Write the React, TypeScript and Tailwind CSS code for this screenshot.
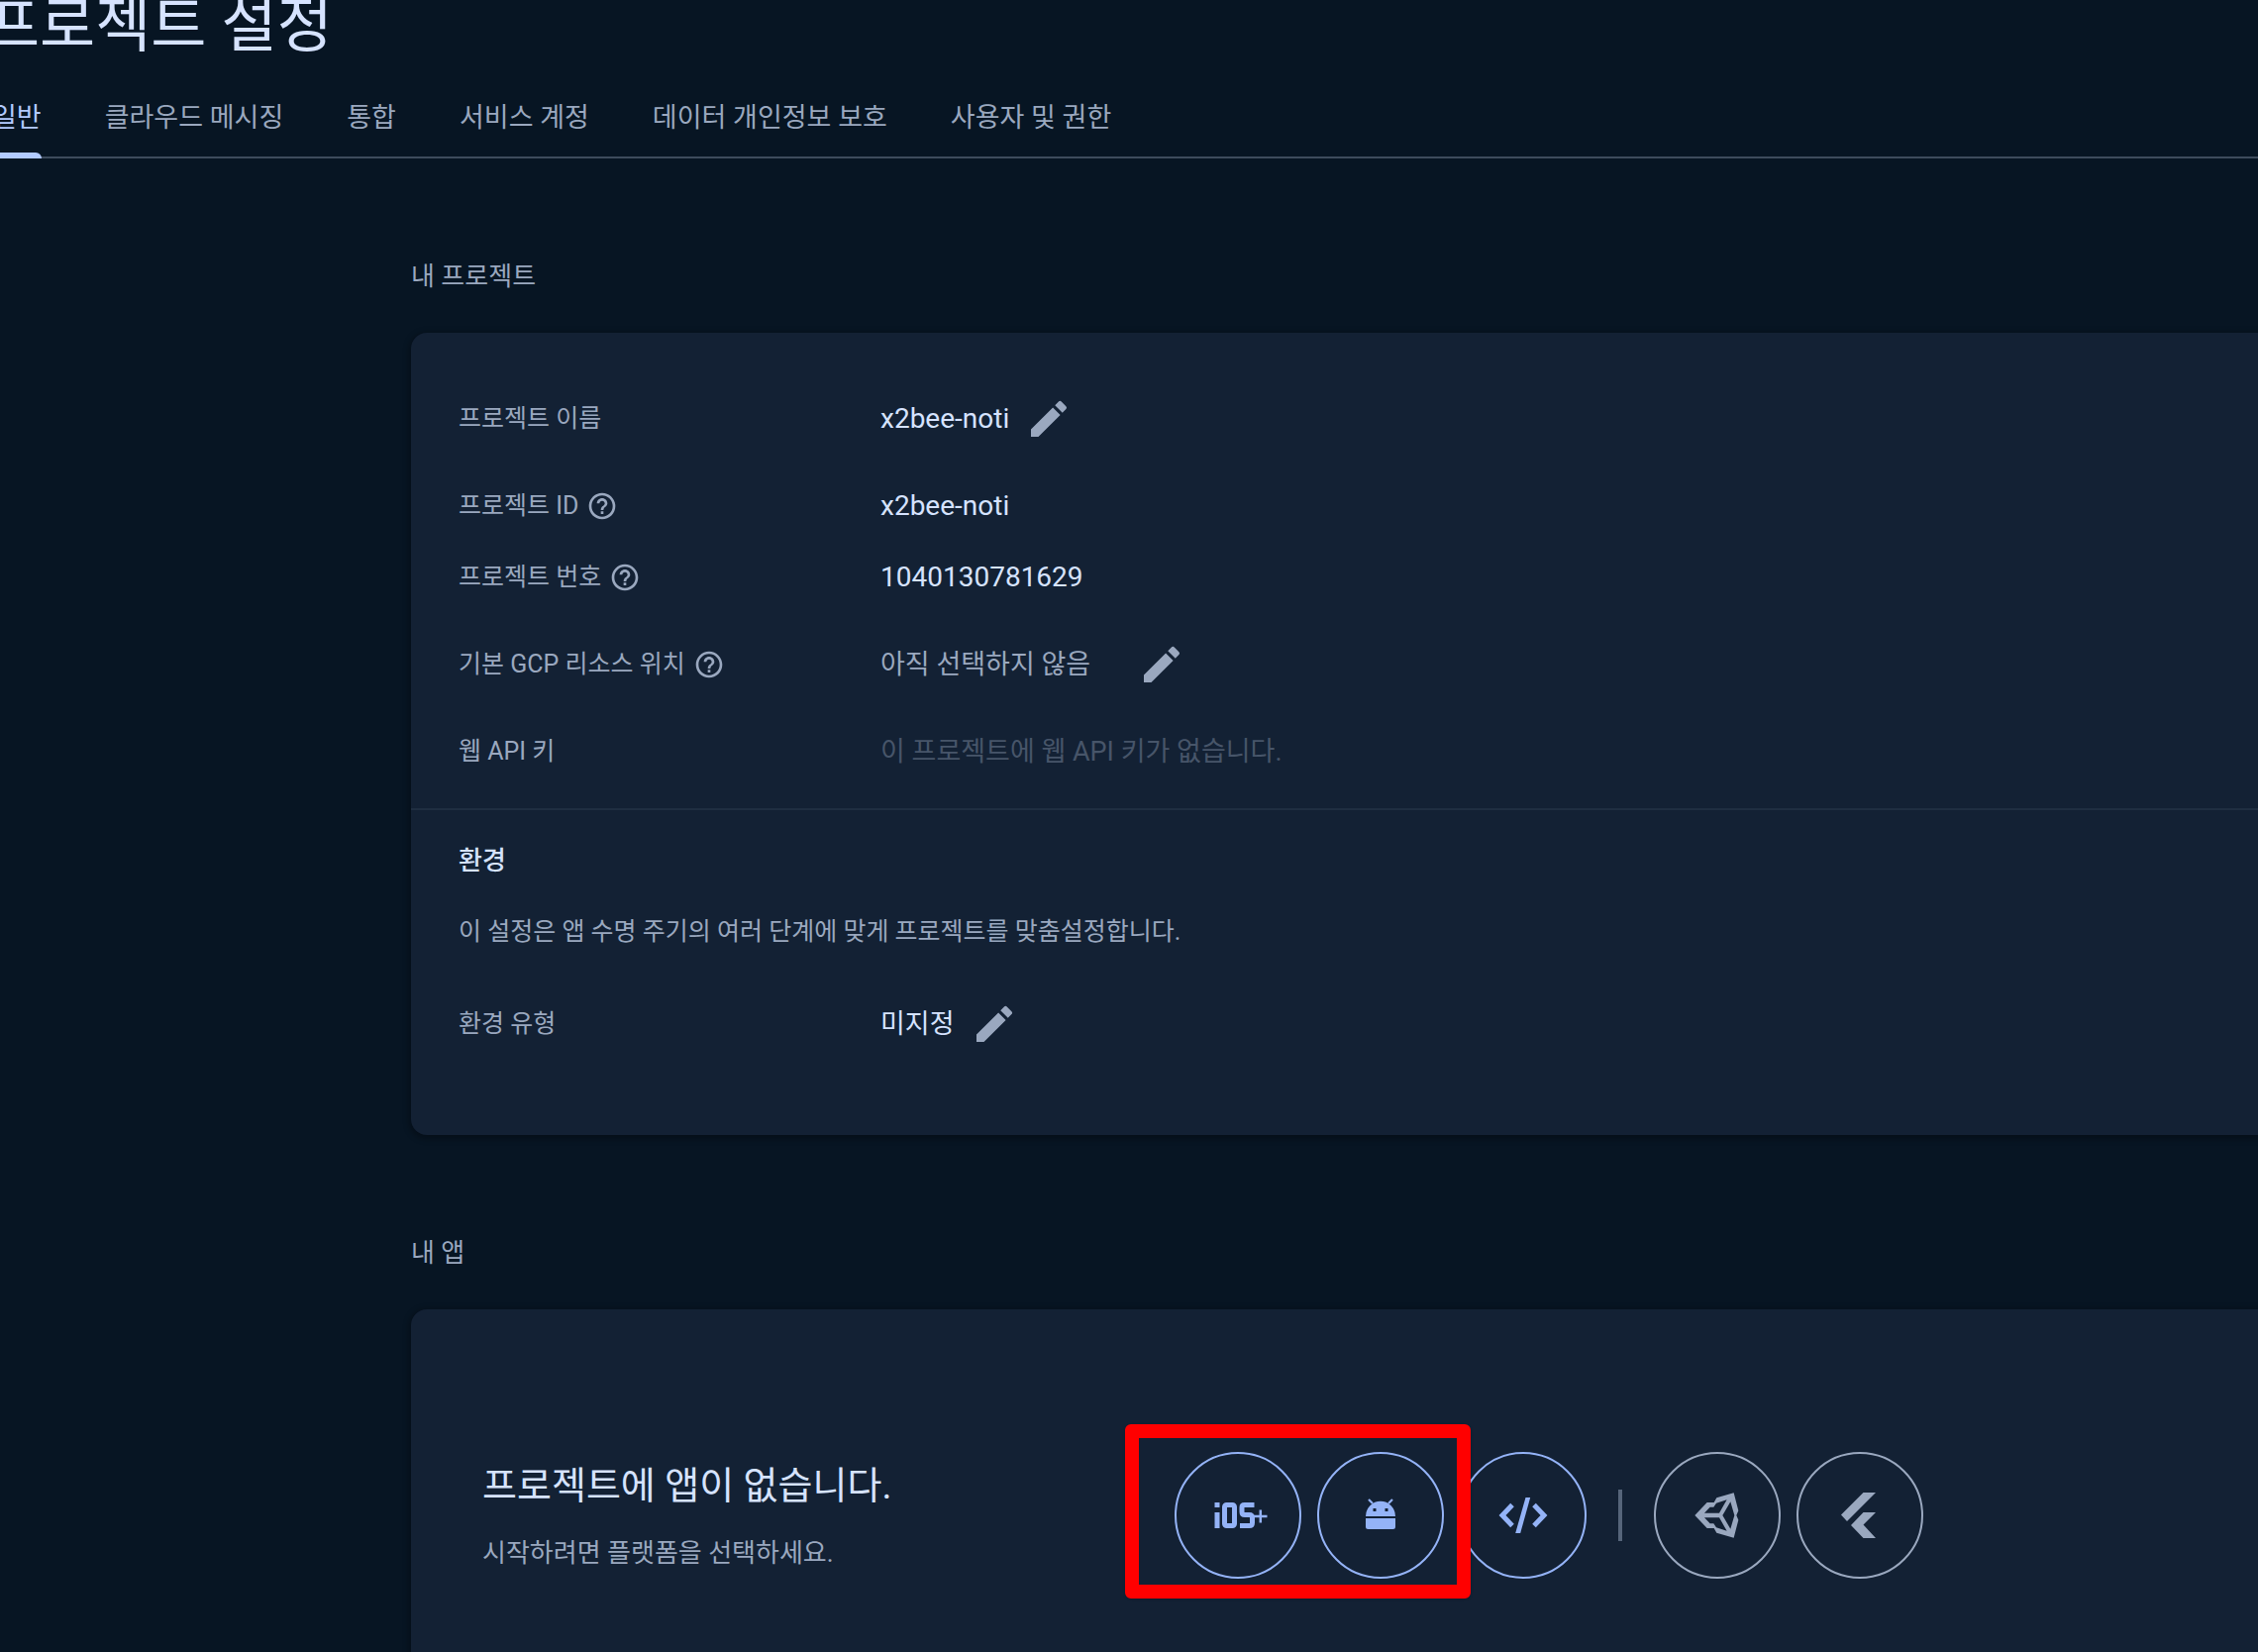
import React from "react";
import { MdEdit, MdHelpOutline } from "react-icons/md";

interface Tab {
	label: string;
	active?: boolean;
}

const tabs: Tab[] = [
	{ label: "일반", active: true },
	{ label: "클라우드 메시징" },
	{ label: "통합" },
	{ label: "서비스 계정" },
	{ label: "데이터 개인정보 보호" },
	{ label: "사용자 및 권한" },
];

interface FieldProps {
	label: string;
	help?: boolean;
	children: React.ReactNode;
	tall?: boolean;
}

const Field: React.FC<FieldProps> = ({ label, help, children, tall }) => (
	<div className={`flex items-center ${tall ? "h-[104px]" : "h-[72px]"}`}>
		<dt className="flex w-[426px] shrink-0 items-center gap-2 text-[25px] leading-9 text-[#9aa8bf]">
			{label}
			{help && (
				<button type="button" aria-label={`${label} 도움말`}>
					<MdHelpOutline className="size-8" />
				</button>
			)}
		</dt>
		<dd className="flex items-center text-[27px] leading-9">{children}</dd>
	</div>
);

const EditButton: React.FC<{ label: string; className?: string }> = ({ label, className = "ml-4" }) => (
	<button type="button" aria-label={label} className={`text-[#9aa8bf] ${className}`}>
		<MdEdit className="size-12" />
	</button>
);

const IosIcon = () => (
	<svg viewBox="0 0 54 26" className="ml-1.5 h-[26px] w-[54px]" fill="none" stroke="currentColor">
		<path d="M3 0v5M3 10v16" strokeWidth="5" />
		<rect x="10.5" y="2.500" width="10" height="21" rx="2" strokeWidth="5" />
		<path d="M40.500 2.500H30.500q-2.500 0-2.500 2.500v4.500q0 3 3 3h4.500q3 0 3 3v5q0 3-3 3H26" strokeWidth="5" />
		<path d="M40 14h13.500M46.800 7.500v13" strokeWidth="2.500" />
	</svg>
);

const AndroidIcon = () => (
	<svg viewBox="0 0 30 31" className="mb-1 h-[31px] w-[30px]" fill="currentColor">
		<path
			fillRule="evenodd"
			d="M0 18A15 15.200 0 0 1 30 18ZM7.500 10v3h3v-3ZM19.500 10v3h3v-3Z"
		/>
		<path d="M7 5 3 1M23 5l4-4" stroke="currentColor" strokeWidth="2.200" />
		<path d="M0 20h30v8.500a2.500 2.500 0 0 1-2.500 2.500h-25A2.500 2.500 0 0 1 0 28.500Z" />
	</svg>
);

const WebIcon = () => (
	<svg viewBox="0 0 50 36" className="h-9 w-[50px]" fill="none" stroke="currentColor" strokeWidth="5">
		<path d="M14 7.500 4 18l10 10.500M36 7.500 46 18 36 28.500" />
		<path d="M27.500 0h4.700L22.200 36h-5Z" fill="currentColor" stroke="none" />
	</svg>
);

const UnityIcon = () => (
	<svg viewBox="-3 0 180 180" className="size-[60px]" fill="currentColor">
		<path
			fillRule="evenodd"
			d="M19 90 56 51H77L85 37 137 22 151 76 145 90 151 104 137 158 85 143 77 129H56ZM48 83H93L116 43 84 53 76 65H65ZM48 97H93L116 137 84 127 76 115H65ZM103 90 127 131 139 90 127 49Z"
		/>
	</svg>
);

const FlutterIcon = () => (
	<svg viewBox="0 0 35 46" className="mr-1 h-[46px] w-[35px]" fill="currentColor">
		<path d="M22.500 0H35L6 29 0 22.500Z" />
		<path d="M22.500 20H35L22.500 32.500 35 46H22.500L10 33Z" />
	</svg>
);

const PlatformButton: React.FC<{ label: string; muted?: boolean; children: React.ReactNode }> = ({ label, muted, children }) => (
	<button
		type="button"
		aria-label={label}
		className={`flex size-32 items-center justify-center rounded-full border-2 ${muted ? "border-[#9aa8bf] text-[#9aa8bf]" : "border-[#94b3f7] text-[#94b3f7]"}`}
	>
		{children}
	</button>
);

export default function App() {
	return (
		<div className="min-h-screen overflow-hidden bg-[#071523] font-['Roboto','Noto_Sans_CJK_KR',sans-serif] text-[#d6e3ff]">
			<header>
				<h1 className="-mt-3 -ml-4 text-[61px] leading-[76px]">프로젝트 설정</h1>
				<nav className="flex h-24 gap-16 border-b-2 border-[#3d4b5c] text-[27px] text-[#9aa8bf]">
					{tabs.map((tab) => (
						<a
							key={tab.label}
							href="#"
							className={`relative flex items-center pt-4 ${tab.active ? "-ml-2 text-[#b2caff]" : ""}`}
						>
							{tab.label}
							{tab.active && <span className="absolute inset-x-0 -bottom-0.5 h-1.5 rounded-t-md bg-[#b2caff]" />}
						</a>
					))}
				</nav>
			</header>

			<main className="pl-[415px]">
				<section>
					<h2 className="pt-[101px] pb-[39px] text-[26px] leading-9 text-[#9aa8bf]">내 프로젝트</h2>
					<div className="rounded-l-2xl bg-[#132134] pb-[60px] shadow-[0_2px_6px_2px_rgba(0,0,0,0.3)]">
						<dl className="border-b-2 border-[#1f2e41] px-12 pt-[35px] pb-[21px]">
							<Field label="프로젝트 이름" tall>
								<span className="text-[28px]">x2bee-noti</span>
								<EditButton label="프로젝트 이름 수정" />
							</Field>
							<Field label="프로젝트 ID" help>
								<span className="text-[28px]">x2bee-noti</span>
							</Field>
							<Field label="프로젝트 번호" help>
								<span className="text-[28px]">1040130781629</span>
							</Field>
							<Field label="기본 GCP 리소스 위치" help tall>
								<span className="text-[#9aa8bf]">아직 선택하지 않음</span>
								<EditButton label="리소스 위치 수정" className="ml-12" />
							</Field>
							<Field label="웹 API 키">
								<span className="text-[#475569]">이 프로젝트에 웹 API 키가 없습니다.</span>
							</Field>
						</dl>
						<div className="px-12 pt-[33px]">
							<h3 className="text-[26px] leading-9 font-medium">환경</h3>
							<p className="mt-9 mb-[23px] text-[25px] leading-9 text-[#9aa8bf]">
								이 설정은 앱 수명 주기의 여러 단계에 맞게 프로젝트를 맞춤설정합니다.
							</p>
							<dl>
								<Field label="환경 유형" tall>
									미지정
									<EditButton label="환경 유형 수정" />
								</Field>
							</dl>
						</div>
					</div>
				</section>

				<section>
					<h2 className="pt-[101px] pb-[39px] text-[26px] leading-9 text-[#9aa8bf]">내 앱</h2>
					<div className="flex items-center rounded-tl-2xl bg-[#132134] px-[72px] pt-36 pb-[84px] shadow-[0_2px_6px_2px_rgba(0,0,0,0.3)]">
						<div className="w-[699px] shrink-0">
							<h3 className="text-[38px] leading-[52px]">프로젝트에 앱이 없습니다.</h3>
							<p className="mt-6 text-[26px] leading-9 text-[#9aa8bf]">시작하려면 플랫폼을 선택하세요.</p>
						</div>
						<div className="flex shrink-0 items-center gap-4">
							<div className="relative flex gap-4">
								<PlatformButton label="iOS"><IosIcon /></PlatformButton>
								<PlatformButton label="Android"><AndroidIcon /></PlatformButton>
								{/* highlight over the mobile platforms */}
								<div className="absolute -top-7 -right-[27px] -bottom-5 -left-[50px] z-10 rounded-md border-[14px] border-[#ff0000] shadow-sm" />
							</div>
							<PlatformButton label="웹"><WebIcon /></PlatformButton>
							<div className="mx-4 h-[52px] w-1 bg-[#56657a]" />
							<PlatformButton label="Unity" muted><UnityIcon /></PlatformButton>
							<PlatformButton label="Flutter" muted><FlutterIcon /></PlatformButton>
						</div>
					</div>
				</section>
			</main>
		</div>
	);
}
